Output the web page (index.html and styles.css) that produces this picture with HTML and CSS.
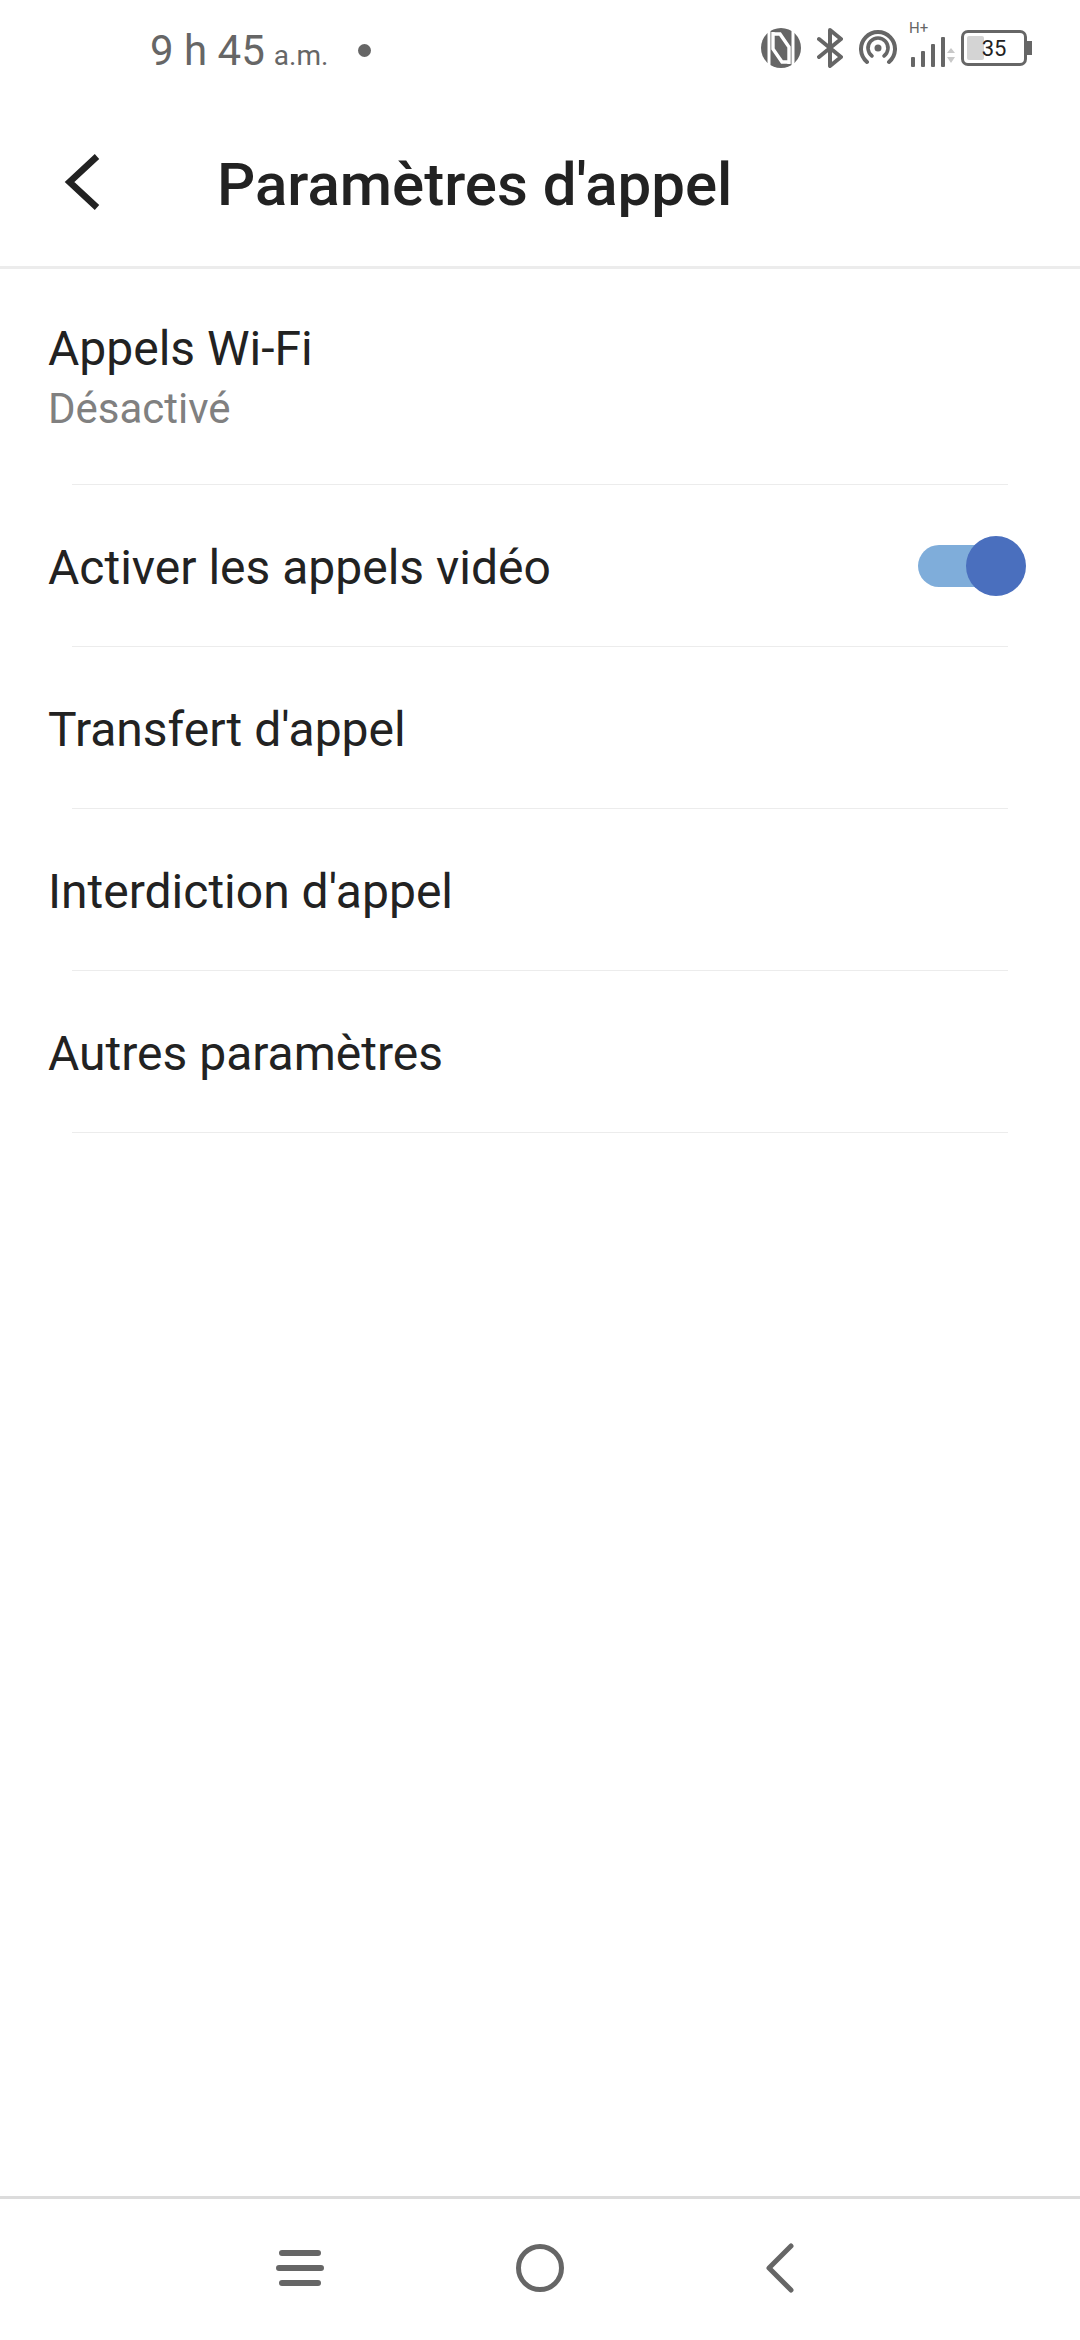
FILE: index.html
```html
<!DOCTYPE html>
<html lang="fr">
<head>
    <meta charset="UTF-8">
    <meta name="viewport" content="width=device-width, initial-scale=1.0">
    <title>Paramètres d'appel</title>
    <link rel="stylesheet" href="styles.css">
</head>
<body>

    <div class="page">

        <div class="status-bar">
            <div class="status-left">
                <span class="time">9 h 45</span>
                <span class="ampm">a.m.</span>
                <span class="status-dot"></span>
            </div>
            <div class="status-icons">
                <!-- NFC -->
                <svg class="icon-nfc" width="40" height="40" viewBox="0 0 40 40">
                    <circle cx="20" cy="20" r="20" fill="#666"/>
                    <path d="M8 0V40" stroke="#fff" stroke-width="3" fill="none"/>
                    <path d="M32 0V40" stroke="#fff" stroke-width="3" fill="none"/>
                    <path d="M13 6H19L28 19V36M27 34H21L12 21V4" stroke="#fff" stroke-width="3.4" fill="none"/>
                </svg>
                <!-- Bluetooth -->
                <svg class="icon-bt" width="26" height="40" viewBox="0 0 26 40">
                    <path d="M2 11L24 29L13 38V2L24 11L2 29" stroke="#666" stroke-width="4" fill="none" stroke-linecap="round" stroke-linejoin="round"/>
                </svg>
                <!-- Hotspot -->
                <svg class="icon-hotspot" width="38" height="36" viewBox="0 0 38 36">
                    <path d="M8 32A17 17 0 1 1 30 32" stroke="#666" stroke-width="4" fill="none" stroke-linecap="round"/>
                    <path d="M13 26A10 10 0 1 1 25 26" stroke="#666" stroke-width="3.6" fill="none" stroke-linecap="round"/>
                    <circle cx="19" cy="18" r="3.5" fill="#666"/>
                </svg>
                <!-- Signal H+ -->
                <div class="signal">
                    <span class="signal-type">H+</span>
                    <svg width="46" height="32" viewBox="0 0 46 32">
                        <rect x="1" y="21" width="4" height="10" rx="1" fill="#666"/>
                        <rect x="11" y="15" width="4" height="16" rx="1" fill="#666"/>
                        <rect x="21" y="8" width="4" height="23" rx="1" fill="#666"/>
                        <rect x="31" y="1" width="4" height="30" rx="1" fill="#666"/>
                        <path d="M37 17L41 12L45 17ZM37 21L41 27L45 21Z" fill="#c8c8c8"/>
                    </svg>
                </div>
                <!-- Batterie -->
                <div class="battery">
                    <div class="battery-body">
                        <div class="battery-level" style="width: 29%"></div>
                        <span class="battery-text">35</span>
                    </div>
                    <div class="battery-nub"></div>
                </div>
            </div>
        </div>

        <div class="app-bar">
            <svg class="back-arrow" width="38" height="60" viewBox="0 0 38 60">
                <path d="M35 3.5L7.5 29L35 54.5" stroke="#222" stroke-width="6.5" fill="none"/>
            </svg>
            <h1 class="title">Paramètres d'appel</h1>
        </div>

        <div class="settings-list">
            <div class="row row-tall">
                <div class="row-text">
                    <div class="row-label">Appels Wi-Fi</div>
                    <div class="row-sub">Désactivé</div>
                </div>
            </div>
            <div class="row">
                <div class="row-label">Activer les appels vidéo</div>
                <div class="toggle">
                    <div class="toggle-track"></div>
                    <div class="toggle-thumb"></div>
                </div>
            </div>
            <div class="row">
                <div class="row-label">Transfert d'appel</div>
            </div>
            <div class="row">
                <div class="row-label">Interdiction d'appel</div>
            </div>
            <div class="row">
                <div class="row-label">Autres paramètres</div>
            </div>
        </div>

        <div class="nav-bar">
            <svg width="48" height="36" viewBox="0 0 48 36">
                <path d="M6 3H42M3 18H45M6 33H42" stroke="#666" stroke-width="6" stroke-linecap="round"/>
            </svg>
            <svg class="nav-home" width="48" height="48" viewBox="0 0 48 48">
                <circle cx="24" cy="24" r="21.5" stroke="#666" stroke-width="5" fill="none"/>
            </svg>
            <svg class="nav-back" width="28" height="50" viewBox="0 0 28 50">
                <path d="M25 3L3 25L25 47" stroke="#666" stroke-width="5" fill="none" stroke-linecap="round" stroke-linejoin="round"/>
            </svg>
        </div>

    </div>

</body>
</html>
```

FILE: styles.css
```css
body {
    font-family: Roboto, "Liberation Sans", sans-serif;
    background-color: #fff;
    margin: 0;
    padding: 0;
}

.page {
    display: flex;
    flex-direction: column;
    height: 2340px;
}

/* Barre d'etat */
.status-bar {
    display: flex;
    justify-content: space-between;
    align-items: center;
    height: 100px;
    padding: 0 48px 0 150px;
    color: #666;
}

.status-left {
    display: flex;
    align-items: baseline;
}

.time {
    font-size: 42px;
}

.ampm {
    font-size: 28px;
    margin-left: 9px;
}

.status-dot {
    width: 13px;
    height: 13px;
    border-radius: 50%;
    background-color: #666;
    margin-left: 30px;
    align-self: center;
}

.status-icons {
    display: flex;
    align-items: center;
    margin-bottom: 4px;
}

.icon-bt {
    margin-left: 16px;
}

.icon-hotspot {
    margin-left: 16px;
}

.signal {
    position: relative;
    margin-left: 13px;
    margin-top: 8px;
}

.signal svg {
    display: block;
}

.signal-type {
    position: absolute;
    left: -1px;
    top: -15px;
    font-size: 15px;
    line-height: 15px;
    color: #666;
}

.battery {
    display: flex;
    align-items: center;
    margin-left: 5px;
}

.battery-body {
    position: relative;
    display: flex;
    align-items: center;
    justify-content: center;
    box-sizing: border-box;
    width: 66px;
    height: 36px;
    border: 3px solid #666;
    border-radius: 7px;
}

.battery-level {
    position: absolute;
    left: 3px;
    top: 3px;
    bottom: 3px;
    background-color: #d4d4d4;
    border-radius: 2px;
}

.battery-text {
    position: relative;
    font-size: 22px;
    color: #222;
}

.battery-nub {
    width: 5px;
    height: 14px;
    background-color: #666;
}

/* Barre de titre */
.app-bar {
    display: flex;
    align-items: center;
    height: 166px;
    border-bottom: 3px solid #ececec;
    padding-left: 62px;
}

.title {
    margin: 2px 0 0 117px;
    font-size: 60px;
    font-weight: 500;
    color: #222;
}

/* Liste */
.settings-list {
    display: flex;
    flex-direction: column;
}

.row {
    position: relative;
    display: flex;
    align-items: center;
    justify-content: space-between;
    box-sizing: border-box;
    height: 162px;
    padding: 0 54px 0 48px;
}

.row::after {
    content: "";
    position: absolute;
    left: 72px;
    right: 72px;
    bottom: 0;
    height: 1px;
    background-color: #ececec;
}

.row > .row-label {
    padding-top: 2px;
}

.row-tall {
    height: 216px;
}

.row-text {
    padding-bottom: 2px;
}

.row-label {
    font-size: 48px;
    color: #222;
}

.row-sub {
    font-size: 42px;
    color: #808080;
    margin-top: 7px;
}

.toggle {
    position: relative;
    width: 108px;
    height: 60px;
}

.toggle-track {
    position: absolute;
    left: 0;
    top: 9px;
    width: 84px;
    height: 42px;
    border-radius: 21px;
    background-color: #7fadda;
}

.toggle-thumb {
    position: absolute;
    right: 0;
    top: 0;
    width: 60px;
    height: 60px;
    border-radius: 50%;
    background-color: #4a6fbe;
}

/* Navigation */
.nav-bar {
    display: flex;
    align-items: center;
    box-sizing: border-box;
    height: 144px;
    margin-top: auto;
    padding: 0 0 4px 276px;
    border-top: 3px solid #dcdcdc;
}

.nav-home {
    margin-left: 192px;
}

.nav-back {
    margin-left: 202px;
}
```
